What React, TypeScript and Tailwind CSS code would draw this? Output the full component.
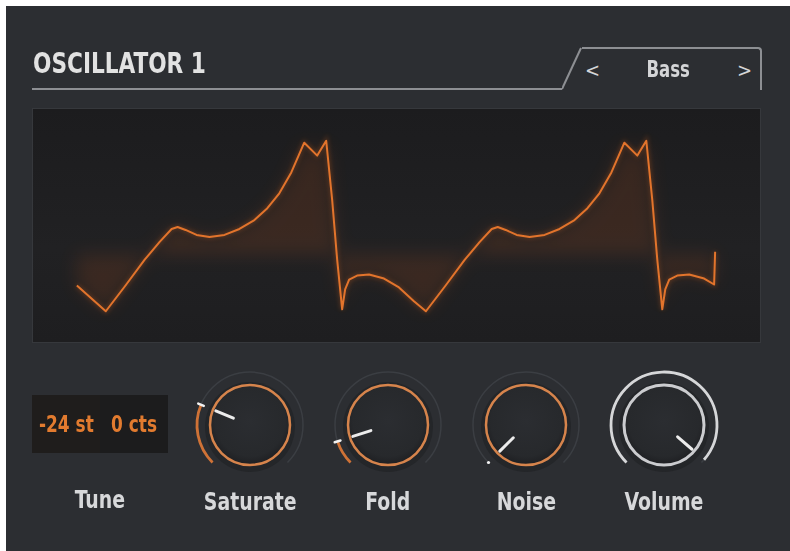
import React from "react";

const condensed = { fontFamily: "'DejaVu Sans Condensed', 'DejaVu Sans', sans-serif", fontStretch: "condensed" };

const polar = (cx: number, cy: number, r: number, deg: number) => {
  const a = ((deg - 90) * Math.PI) / 180;
  return [cx + r * Math.cos(a), cy + r * Math.sin(a)];
};

const arc = (r: number, a0: number, a1: number) => {
  const [x0, y0] = polar(60, 60, r, a0);
  const [x1, y1] = polar(60, 60, r, a1);
  const large = a1 - a0 > 180 ? 1 : 0;
  return `M ${x0} ${y0} A ${r} ${r} 0 ${large} 1 ${x1} ${y1}`;
};

type KnobProps = { value: number; light?: boolean };

const Knob = ({ value, light }: KnobProps) => {
  const ang = -135 + value * 270;
  const ring = light ? "#cbcccf" : "#d6844c";
  const valueArc = light ? "#d6d7d9" : "#cf7236";
  const [p0x, p0y] = polar(60, 60, 37, ang);
  const [p1x, p1y] = polar(60, 60, 18, ang);
  const [t0x, t0y] = polar(60, 60, 50, ang);
  const [t1x, t1y] = polar(60, 60, 56, ang);
  return (
    <svg width="120" height="120" viewBox="0 0 120 120">
      <defs>
        <radialGradient id="kb" cx="50%" cy="45%" r="55%">
          <stop offset="0%" stopColor="#2b2d31" />
          <stop offset="80%" stopColor="#27292c" />
          <stop offset="100%" stopColor="#1e1f22" />
        </radialGradient>
      </defs>
      <path d={arc(53, -135, 135)} fill="none" stroke="#3b3e43" strokeWidth="1.5" />
      {value > 0.01 && (
        <path d={arc(53, -135, ang)} fill="none" stroke={valueArc} strokeWidth="2.8" />
      )}
      <circle cx="60" cy="62" r="45" fill="#1c1d20" opacity="0.5" />
      <circle cx="60" cy="60" r="40" fill="url(#kb)" stroke={ring} strokeWidth={light ? 3 : 2.5} />
      <line x1={p0x} y1={p0y} x2={p1x} y2={p1y} stroke="#ececec" strokeWidth="3" strokeLinecap="round" />
      {!light &&
        (value > 0.01 ? (
          <line x1={t0x} y1={t0y} x2={t1x} y2={t1y} stroke="#f2f2f2" strokeWidth="2.5" strokeLinecap="round" />
        ) : (
          <circle cx={polar(60, 60, 53, -135)[0]} cy={polar(60, 60, 53, -135)[1]} r="1.6" fill="#f2f2f2" />
        ))}
    </svg>
  );
};

const period = [
  [106, 312], [125, 287], [145, 260], [160, 242], [172, 229], [178, 227], [186, 230], [197, 235],
  [210, 237], [225, 235], [240, 229], [255, 220], [268, 208], [280, 193], [292, 172], [305, 142],
  [318, 155], [327, 140], [333, 200], [338, 260], [343, 310], [346, 290], [350, 280], [358, 276],
  [370, 275], [385, 279], [400, 288], [415, 302],
];

const wavePoints: number[][] = [[77, 286]];
period.forEach((p) => wavePoints.push(p));
period.forEach((p) => wavePoints.push([p[0] + 321, p[1]]));
wavePoints.splice(wavePoints.length - 3);
wavePoints.push([706, 279], [716, 285], [717, 252]);

const line = wavePoints.map((p, i) => `${i ? "L" : "M"} ${p[0]} ${p[1]}`).join(" ");
const area = `${line} L 717 255 L 77 255 Z`;

const Waveform = () => (
  <svg className="block h-full w-full" viewBox="33 108 729 235" preserveAspectRatio="none">
    <defs>
      <filter id="glow" x="-10%" y="-10%" width="120%" height="120%">
        <feGaussianBlur stdDeviation="9" />
      </filter>
      <filter id="soft" x="-10%" y="-10%" width="120%" height="120%">
        <feGaussianBlur stdDeviation="2" />
      </filter>
    </defs>
    <path d={area} fill="#b9521c" opacity="0.17" filter="url(#glow)" />
    <path d={line} fill="none" stroke="#e06a22" strokeWidth="4" opacity="0.25" filter="url(#soft)" />
    <path d={line} fill="none" stroke="#e2742c" strokeWidth="2" strokeLinejoin="round" />
  </svg>
);

const knobs = [
  { label: "Saturate", value: 0.25 },
  { label: "Fold", value: 0.1 },
  { label: "Noise", value: 0 },
  { label: "Volume", value: 0.985, light: true },
];

export default function App() {
  return (
    <div className="min-h-screen bg-white pl-[6px] pt-[6px]">
      <div className="h-[545px] w-[784px] bg-[#2c2e32] pl-[26px] pr-[28px] pt-[41px]" style={condensed}>
        <div className="flex h-[43px] items-stretch">
          <div className="flex flex-1 items-end border-b-2 border-[#8d8f93] pb-[10px] pl-[1px]">
            <h1 className="origin-left whitespace-nowrap text-[29px] font-bold leading-none text-[#e2e2e2] [transform:scaleX(0.83)]">
              OSCILLATOR 1
            </h1>
          </div>
          <svg width="20" height="43" viewBox="0 0 20 43" className="block shrink-0">
            <path d="M0 42 L19 1" stroke="#8d8f93" strokeWidth="2" fill="none" />
          </svg>
          <div className="flex w-[180px] items-center justify-between rounded-tr-[4px] border-r-2 border-t-2 border-[#8d8f93] pl-[3px] pr-[8px] text-[#d4d5d7]">
            <span className="text-[20px] leading-none">&lt;</span>
            <span className="text-[23px] font-bold leading-none [transform:scaleX(0.8)]">Bass</span>
            <span className="text-[20px] leading-none">&gt;</span>
          </div>
        </div>

        <div className="mt-[18px] h-[235px] w-[729px] overflow-hidden border border-[#36383c] bg-[linear-gradient(180deg,#1c1c1e,#212123_60%,#1e1e20)]">
          <Waveform />
        </div>

        <div className="mt-[22px] flex gap-[18px]">
          <div className="flex w-[140px] flex-col">
            <div className="mt-[30px] flex h-[58px] w-[136px] items-center text-[23px] font-bold text-[#e27b2f]">
              <div className="flex h-full w-[68px] items-center justify-center bg-[#1f1d1c]">
                <span className="inline-block whitespace-nowrap [transform:scaleX(0.82)]">-24 st</span>
              </div>
              <div className="flex h-full w-[68px] items-center justify-center bg-[#1c1c1d]">
                <span className="inline-block whitespace-nowrap [transform:scaleX(0.82)]">0 cts</span>
              </div>
            </div>
            <div className="mt-[34px] w-[136px] text-center">
              <span className="inline-block text-[25px] font-bold leading-none text-[#d7d8da] [transform:scaleX(0.84)]">Tune</span>
            </div>
          </div>
          {knobs.map((k) => (
            <div key={k.label} className="flex w-[120px] flex-col items-center">
              <Knob value={k.value} light={k.light} />
              <span className="mt-[4px] inline-block whitespace-nowrap text-[25px] font-bold leading-none text-[#d7d8da] [transform:scaleX(0.84)]">
                {k.label}
              </span>
            </div>
          ))}
        </div>
      </div>
    </div>
  );
}
